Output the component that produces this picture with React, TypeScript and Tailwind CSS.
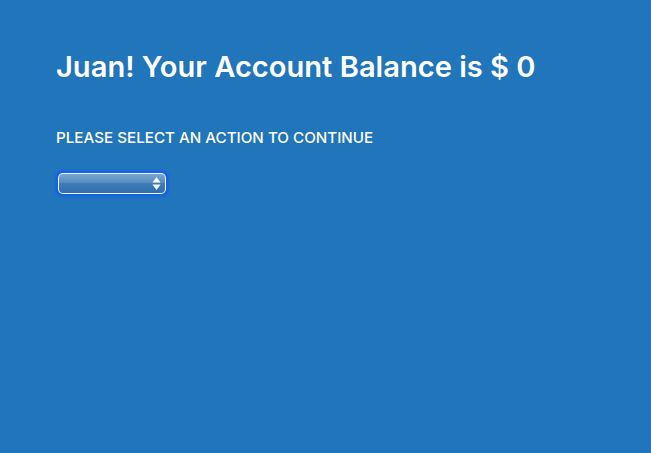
export default function App() {
  return (
    <div
      className="min-h-[453px] w-full bg-[#2175ba] px-14 pt-[45px] text-white"
      style={{ fontFamily: "Inter, 'Liberation Sans', sans-serif" }}
    >
      <h1 className="text-[29.1px] font-semibold leading-[44px]">
        Juan! Your Account Balance is $ 0
      </h1>

      <p className="mt-[39px] text-[15.2px] font-medium leading-5">
        PLEASE SELECT AN ACTION TO CONTINUE
      </p>

      <div className="mt-[23px] inline-flex rounded-[6px] bg-[#1763dd] p-[2px] shadow-[0_0_2px_1px_#1a66dd]">
        <div className="relative h-[21px] w-[108px] overflow-hidden rounded-[5px] border border-white/90 bg-gradient-to-b from-[#6a9bc9] via-[#3f7db8] to-[#2f6fae]">
          <div className="absolute inset-x-0 top-0 h-[9px] bg-white/10" />
          <svg
            className="absolute right-[4px] top-[2px]"
            width="9"
            height="15"
            viewBox="0 0 9 15"
          >
            <path d="M4.5 1 L8.5 6.5 L0.5 6.5 Z" fill="white" />
            <path d="M4.5 14 L8.5 8.5 L0.5 8.5 Z" fill="white" />
          </svg>
        </div>
      </div>
    </div>
  );
}
